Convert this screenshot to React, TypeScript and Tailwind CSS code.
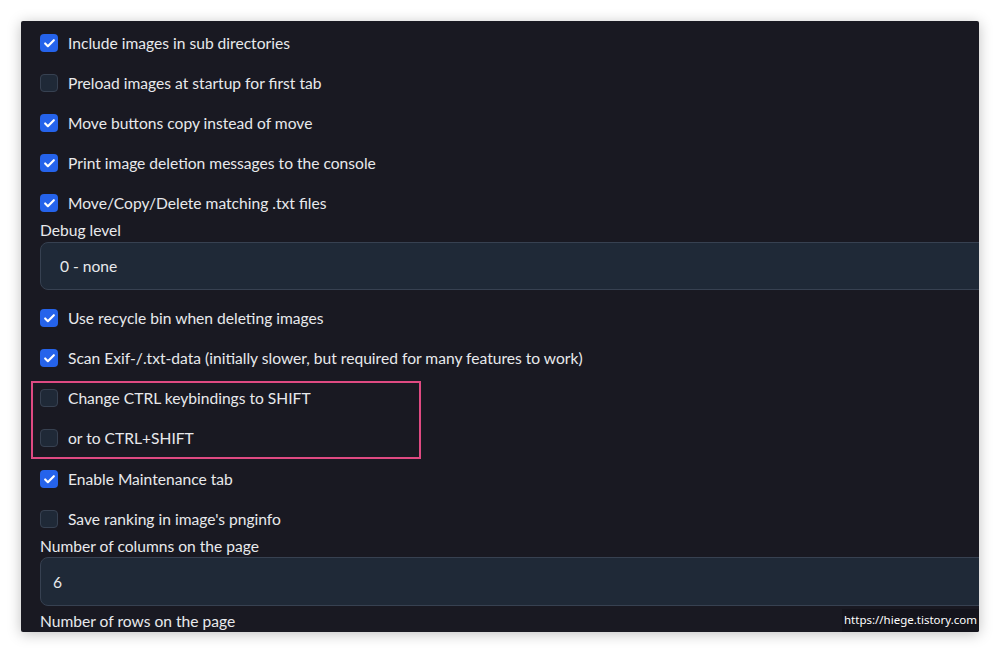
import { Check } from "lucide-react";

type Item = { label: string; checked: boolean };

const Box = ({ checked }: { checked: boolean }) =>
  checked ? (
    <span className="flex h-[18px] w-[18px] shrink-0 items-center justify-center rounded-[4px] bg-[#2563eb]">
      <Check className="h-[13px] w-[13px] text-white" strokeWidth={4} />
    </span>
  ) : (
    <span className="h-[18px] w-[18px] shrink-0 rounded-[4px] border border-[#374151] bg-[#1f2937]" />
  );

const Row = ({ label, checked }: Item) => (
  <label className="flex h-[40px] items-center gap-[10px]">
    <Box checked={checked} />
    <span>{label}</span>
  </label>
);

const top: Item[] = [
  { label: "Include images in sub directories", checked: true },
  { label: "Preload images at startup for first tab", checked: false },
  { label: "Move buttons copy instead of move", checked: true },
  { label: "Print image deletion messages to the console", checked: true },
  { label: "Move/Copy/Delete matching .txt files", checked: true },
];

const App = () => {
  return (
    <div className="h-[653px] w-[1000px] bg-white pl-[21px] pt-[21px]">
      <div
        className="relative h-[611px] w-[958px] overflow-hidden rounded-[2px] bg-[#191922] pl-[19px] pt-[2px] text-[15.6px] leading-[20px] text-[#e8e9ec] shadow-[0_2px_14px_rgba(0,0,0,0.25)]"
        style={{ fontFamily: "Lato, 'Noto Sans', sans-serif" }}
      >
        {top.map((it) => (
          <Row key={it.label} {...it} />
        ))}
        <div className="-mt-[3px]">Debug level</div>
        <div className="mt-[2px] flex h-[48px] w-[1000px] items-center rounded-[8px] border border-[#374151] bg-[#1f2937] pl-[19px]">
          0 - none
        </div>
        <div className="mt-[8px]">
          <Row label="Use recycle bin when deleting images" checked />
          <Row label="Scan Exif-/.txt-data (initially slower, but required for many features to work)" checked />
          <div className="relative">
            <div className="absolute -left-[9px] top-[3px] h-[78px] w-[390px] border-2 border-[#df4a82]" />
            <Row label="Change CTRL keybindings to SHIFT" checked={false} />
            <Row label="or to CTRL+SHIFT" checked={false} />
          </div>
          <div className="mt-[1px]">
            <Row label="Enable Maintenance tab" checked />
            <Row label="Save ranking in image's pnginfo" checked={false} />
          </div>
        </div>
        <div className="-mt-[3px]">Number of columns on the page</div>
        <div className="mt-[1px] flex h-[49px] w-[1000px] items-center rounded-[8px] border border-[#374151] bg-[#1f2937] pl-[12px]">
          6
        </div>
        <div className="mt-[5px]">Number of rows on the page</div>
        <div
          className="absolute bottom-0 right-0 bg-[#14141c] px-[2px] pb-[4px] pt-[3px] text-[11.5px] leading-[16px] text-white"
          style={{ fontFamily: "'Noto Sans', sans-serif" }}
        >
          https://hiege.tistory.com
        </div>
      </div>
    </div>
  );
};

export default App;
